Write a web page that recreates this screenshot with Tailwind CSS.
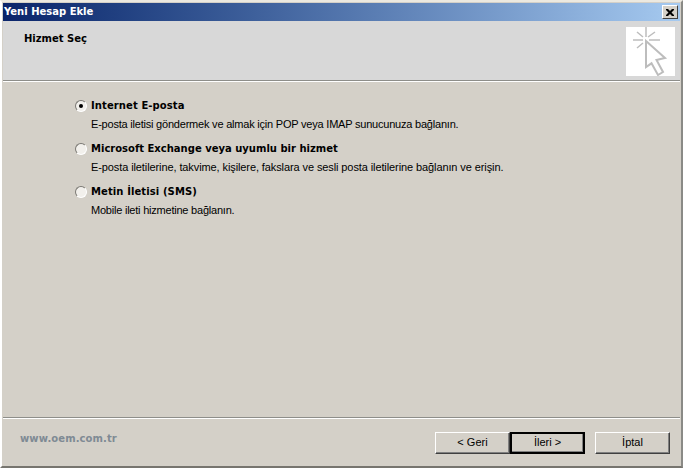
<!DOCTYPE html>
<html><head><meta charset="utf-8"><script src="https://cdn.jsdelivr.net/npm/@tailwindcss/browser@4"></script></head>
<body class="w-[683px] h-[468px] overflow-hidden bg-[#d4d0c8] font-['Liberation_Sans',sans-serif] text-[11px] text-black">
<div class="w-[683px] h-[468px] flex flex-col border-t-2 border-l-2 border-r-2 border-b-2 border-t-[#ece9e0] border-l-white border-r-[#8a8a86] border-b-[#77756f] pl-px pr-px pt-px">
  <div class="h-[18px] shrink-0 flex items-center justify-between bg-gradient-to-r from-[#0a246a] to-[#a6caf0] pl-px pr-[2px]">
    <span class="text-white font-bold font-['DejaVu_Sans',sans-serif] text-[10px] leading-none">Yeni Hesap Ekle</span>
    <div class="w-4 h-[14px] bg-[#d4d0c8] border border-t-white border-l-white border-r-[#404040] border-b-[#404040] flex items-center justify-center">
      <svg width="8" height="7" viewBox="0 0 8 7"><path d="M0 0h2l2 2 2-2h2v1L5.500 3.500 8 6v1H6L4 5 2 7H0V6l2.500-2.500L0 1z" fill="#000"/></svg>
    </div>
  </div>
  <div class="h-[59px] shrink-0 bg-[#d8d8d8] flex justify-between pl-[21px] pr-[5px] pt-[6px]">
    <div class="font-bold font-['DejaVu_Sans',sans-serif] text-[10px] pt-[5px] leading-[14px]">Hizmet Seç</div>
    <div class="w-[49px] h-[49px] bg-white">
      <svg width="49" height="49" viewBox="0 0 49 49" fill="none" stroke="#bdbdbd" stroke-width="1.500">
        <path d="M7 13h10M23 13h11M20 0v10M11 5l6 5M29 5l-7 5M11 21l6-5"/>
        <path d="M20 14v26l5.500-3.700L32 48l5-3-6.500-12 8.500-2z" stroke-width="2" fill="#fff"/>
      </svg>
    </div>
  </div>
  <div class="h-[2px] shrink-0 bg-[#8e8e8a] border-b border-white"></div>
  <main class="flex-1 pl-[72px] pt-[17px] flex flex-col gap-[11px]">
    <div class="flex gap-[4px]">
      <div class="w-[12px] h-[12px] mt-[1px] rounded-full border border-t-[#7a7873] border-l-[#7a7873] border-r-white border-b-white bg-[#f2f0ec] flex items-center justify-center"><div class="w-[4px] h-[4px] rounded-full bg-black"></div></div>
      <div class="flex flex-col gap-[4px]">
        <div class="font-bold font-['DejaVu_Sans',sans-serif] text-[10px] leading-[14px] tracking-[0.1px]">Internet E-posta</div>
        <div class="leading-[14px] whitespace-nowrap tracking-[-0.21px]">E-posta iletisi göndermek ve almak için POP veya IMAP sunucunuza bağlanın.</div>
      </div>
    </div>
    <div class="flex gap-[4px]">
      <div class="w-[12px] h-[12px] mt-[1px] rounded-full border border-t-[#7a7873] border-l-[#7a7873] border-r-white border-b-white bg-[#f2f0ec]"></div>
      <div class="flex flex-col gap-[4px]">
        <div class="font-bold font-['DejaVu_Sans',sans-serif] text-[10px] leading-[14px]">Microsoft Exchange veya uyumlu bir hizmet</div>
        <div class="leading-[14px] whitespace-nowrap tracking-[-0.1px]">E-posta iletilerine, takvime, kişilere, fakslara ve sesli posta iletilerine bağlanın ve erişin.</div>
      </div>
    </div>
    <div class="flex gap-[4px]">
      <div class="w-[12px] h-[12px] mt-[1px] rounded-full border border-t-[#7a7873] border-l-[#7a7873] border-r-white border-b-white bg-[#f2f0ec]"></div>
      <div class="flex flex-col gap-[4px]">
        <div class="font-bold font-['DejaVu_Sans',sans-serif] text-[10px] leading-[14px] tracking-[0.1px]">Metin İletisi (SMS)</div>
        <div class="leading-[14px] whitespace-nowrap tracking-[-0.22px]">Mobile ileti hizmetine bağlanın.</div>
      </div>
    </div>
  </main>
  <div class="h-[2px] shrink-0 bg-[#8e8e8a] border-b border-white"></div>
  <footer class="h-[47px] shrink-0 flex items-center justify-between pl-[17px] pr-[10px]">
    <span class="font-bold font-['DejaVu_Sans',sans-serif] text-[10px] text-[#7f8a94] tracking-[0.1px] mb-[8px]">www.oem.com.tr</span>
    <div class="flex">
      <div class="w-[75px] h-[22px] flex items-center justify-center bg-[#d4d0c8] border border-t-white border-l-white border-r-[#404040] border-b-[#404040] shadow-[inset_-1px_-1px_0_#808080]">&lt; Geri</div>
      <div class="w-[75px] h-[22px] flex items-center justify-center bg-[#d4d0c8] border-2 border-black shadow-[inset_-1px_-1px_0_#808080]">İleri &gt;</div>
      <div class="ml-[10px] w-[75px] h-[22px] flex items-center justify-center bg-[#d4d0c8] border border-t-white border-l-white border-r-[#404040] border-b-[#404040] shadow-[inset_-1px_-1px_0_#808080]">İptal</div>
    </div>
  </footer>
</div>
</body></html>
